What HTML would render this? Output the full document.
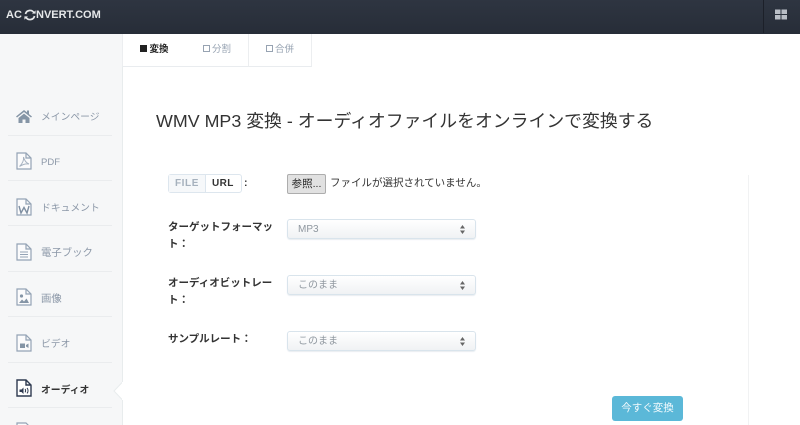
<!DOCTYPE html>
<html lang="ja"><head><meta charset="utf-8">
<style>
html,body{margin:0;padding:0;width:800px;height:425px;overflow:hidden;background:#fff;font-family:"Liberation Sans","Noto Sans CJK JP",sans-serif;}
#wrap{position:absolute;left:0;top:0;width:800px;height:425px;overflow:hidden;}
.a{position:absolute;white-space:nowrap;}
#top{position:absolute;left:0;top:0;width:800px;height:34px;background:linear-gradient(#2e3541,#272d38);}
#side{position:absolute;left:0;top:34px;width:122px;height:391px;background:#f6f7f8;border-right:1px solid #e8eced;}
.hr{position:absolute;left:8px;width:104px;height:1px;background:#eaecee;}
.nav{position:absolute;left:41px;font-size:9.8px;color:#8c98a8;white-space:nowrap;line-height:14px;}
.ic{position:absolute;left:16px;width:16px;height:18px;}
.tab{position:absolute;top:34px;height:32px;border-right:1px solid #eceef0;border-bottom:1px solid #e9ecef;font-size:9.5px;line-height:32px;text-align:center;color:#97a3b2;background:#fff;}
.lab{position:absolute;left:168px;font-size:10.5px;font-weight:bold;color:#333;line-height:18px;}
.sel{position:absolute;left:287px;width:187px;height:18px;border:1px solid #d9e4ec;border-radius:3px;background:linear-gradient(#fff,#f0f2f4);font-size:10px;color:#8f979f;line-height:18px;padding:0;box-shadow:0 1px 1px #e8edf1;}
.sel span{position:absolute;left:10px;top:1px;}
.sel i{position:absolute;left:172px;top:5px;width:5px;height:9px;}
.sel svg{display:block;}
</style></head><body><div id="wrap">
<div id="top"></div>
<div class="a" style="left:6px;top:7px;font-size:11px;font-weight:bold;color:#e6e8ea;line-height:16px;">AC</div>
<svg class="a" style="left:24px;top:9px" width="12" height="12" viewBox="0 0 12 12"><path d="M1.500 5A4.600 4.600 0 0 1 10 3.800M10.500 7A4.600 4.600 0 0 1 2 8.200" fill="none" stroke="#e6e8ea" stroke-width="1.700"/><path d="M8 4.600h3.600V1.400zM4 7.400H.4v3.200z" fill="#e6e8ea"/></svg>
<div class="a" style="left:36px;top:7px;font-size:11px;font-weight:bold;color:#e6e8ea;line-height:16px;">NVERT.COM</div>
<div class="a" style="left:763px;top:0;width:1px;height:33px;background:#1c2029;"></div>
<svg class="a" style="left:774px;top:8px" width="14" height="13" viewBox="0 0 14 13"><path d="M1 1.500h5.500v4.500H1zM7.500 1.500H13v4.500H7.500zM1 7h5.500v4.500H1zM7.500 7H13v4.500H7.500z" fill="#b9bec6"/></svg>

<div id="side"></div>
<div class="hr" style="top:135px"></div><div class="hr" style="top:180px"></div><div class="hr" style="top:225px"></div><div class="hr" style="top:271px"></div><div class="hr" style="top:316px"></div><div class="hr" style="top:362px"></div><div class="hr" style="top:407px"></div>

<svg class="ic" style="top:107px" viewBox="0 0 16 18"><path d="M0 9.500 8 3l3 2.400V3.500h2v3.600l3 2.400-1 1L8 5 1 10.500zM2.500 11 8 6.600l5.500 4.400V16H9.500v-3.500h-3V16h-4z" fill="#8595a6"/></svg>
<svg class="ic" style="top:152px" viewBox="0 0 16 18"><path d="M1 1h9l5 5v11H1zM10 1v5h5" fill="#fbfbfc" stroke="#94a3b5" stroke-width="1.200"/><path d="M3.500 14.500C6 12 8 8.500 7.500 5c1 4 3 6 5.500 7-3-.5-6 .2-9.500 2.500z" fill="none" stroke="#a7b3c1"/></svg>
<svg class="ic" style="top:198px" viewBox="0 0 16 18"><path d="M1 1h9l5 5v11H1zM10 1v5h5" fill="#fbfbfc" stroke="#94a3b5" stroke-width="1.200"/><path d="M3 8l2 7 3-5.500L11 15l2-7" fill="none" stroke="#7f8fa2" stroke-width="1.400"/></svg>
<svg class="ic" style="top:243px" viewBox="0 0 16 18"><path d="M1 1h9l5 5v11H1zM10 1v5h5" fill="#fbfbfc" stroke="#94a3b5" stroke-width="1.200"/><path d="M4 9h8M4 11.500h8M4 14h8" stroke="#94a3b5" stroke-width="1.100"/></svg>
<svg class="ic" style="top:288px" viewBox="0 0 16 18"><path d="M1 1h9l5 5v11H1zM10 1v5h5" fill="#fbfbfc" stroke="#94a3b5" stroke-width="1.200"/><circle cx="5.500" cy="8" r="1.600" fill="#8595a6"/><path d="M3 15l3-3.500 2 2 2.500-3 2.500 4.500z" fill="#8595a6"/></svg>
<svg class="ic" style="top:334px" viewBox="0 0 16 18"><path d="M1 1h9l5 5v11H1zM10 1v5h5" fill="#fbfbfc" stroke="#94a3b5" stroke-width="1.200"/><path d="M4 9.500h5v4.500H4zM10 11l2.500-1.500v4.500L10 12.500z" fill="#8595a6"/></svg>
<svg class="ic" style="top:379px" viewBox="0 0 16 18"><path d="M1 1h9l5 5v11H1zM10 1v5h5" fill="#fff" stroke="#2e3a50" stroke-width="1.400"/><path d="M3.500 10.500h2l2-2v6.500l-2-2h-2z" fill="#2e3a50"/><path d="M9 10c.8.800.8 2.500 0 3.300M11 9c1.400 1.400 1.400 4 0 5.400" fill="none" stroke="#2e3a50"/></svg>
<svg class="ic" style="top:422px" viewBox="0 0 16 18"><path d="M1 1h9l5 5v11H1z" fill="#fbfbfc" stroke="#94a3b5" stroke-width="1.200"/></svg>

<div class="nav" style="top:111px">メインページ</div>
<div class="nav" style="top:156px;font-size:9.500px">PDF</div>
<div class="nav" style="top:202px">ドキュメント</div>
<div class="nav" style="top:247px;font-size:10.400px">電子ブック</div>
<div class="nav" style="top:293px;font-size:10.400px">画像</div>
<div class="nav" style="top:338px">ビデオ</div>
<div class="nav" style="top:384px;color:#333;font-weight:bold">オーディオ</div>
<svg class="a" style="left:113px;top:382px" width="10" height="18" viewBox="0 0 10 18"><path d="M9.500 0 1 9l8.500 9" fill="#fff" stroke="#e8eced"/><path d="M9 0h1v18H9z" fill="#fff"/></svg>

<div class="tab" style="left:122px;width:63px;color:#222;font-weight:bold;border-left:1px solid #eceef0;"><span style="display:inline-block;width:7px;height:7px;background:#222;margin-right:2px;"></span>変換</div>
<div class="tab" style="left:186px;width:62px;"><span style="display:inline-block;width:5px;height:5px;border:1px solid #97a3b2;margin-right:2px;"></span>分割</div>
<div class="tab" style="left:249px;width:62px;"><span style="display:inline-block;width:5px;height:5px;border:1px solid #97a3b2;margin-right:2px;"></span>合併</div>

<div class="a" style="left:156px;top:108px;font-size:17.850px;color:#333;line-height:26px;">WMV MP3 変換 - オーディオファイルをオンラインで変換する</div>

<div class="a" style="left:748px;top:175px;width:1px;height:250px;background:#f1f2f3;"></div>

<div class="a" style="left:168px;top:174px;width:72px;height:17px;border:1px solid #dde6ee;border-radius:3px;background:#fff;"></div>
<div class="a" style="left:169px;top:175px;width:36px;height:17px;background:#f6f8fa;border-right:1px solid #dde6ee;font-size:10px;font-weight:bold;color:#a6b1bd;text-align:center;line-height:17px;letter-spacing:.6px;">FILE</div>
<div class="a" style="left:212px;top:175px;font-size:10px;font-weight:bold;color:#333;line-height:17px;letter-spacing:.4px;">URL</div>
<div class="a" style="left:244px;top:174px;font-size:10.500px;font-weight:bold;color:#333;line-height:18px;">:</div>

<div class="a" style="left:287px;top:174px;width:37px;height:18px;background:#e1e1e1;border:1px solid #adadad;border-radius:2px;font-size:10.500px;color:#222;text-align:center;line-height:18px;">参照...</div>
<div class="a" style="left:330px;top:175px;font-size:10.500px;color:#333;line-height:16px;">ファイルが選択されていません。</div>

<div class="lab" style="top:218px">ターゲットフォーマッ<br><span style="position:relative;top:-1px">ト：</span></div>
<div class="lab" style="top:274px">オーディオビットレー<br><span style="position:relative;top:-1px">ト：</span></div>
<div class="lab" style="top:330px">サンプルレート：</div>

<div class="sel" style="top:219px"><span>MP3</span><i><svg width="5" height="9" viewBox="0 0 5 9"><path d="M2.500 0 5 3.500H0zM2.500 9 0 5.500h5z" fill="#666"/></svg></i></div>
<div class="sel" style="top:275px"><span>このまま</span><i><svg width="5" height="9" viewBox="0 0 5 9"><path d="M2.500 0 5 3.500H0zM2.500 9 0 5.500h5z" fill="#666"/></svg></i></div>
<div class="sel" style="top:331px"><span>このまま</span><i><svg width="5" height="9" viewBox="0 0 5 9"><path d="M2.500 0 5 3.500H0zM2.500 9 0 5.500h5z" fill="#666"/></svg></i></div>

<div class="a" style="left:612px;top:396px;width:71px;height:25px;background:#5bb8d8;border-radius:3px;color:#f2fafd;font-size:10.500px;text-align:center;line-height:25px;">今すぐ変換</div>
</div></body></html>
